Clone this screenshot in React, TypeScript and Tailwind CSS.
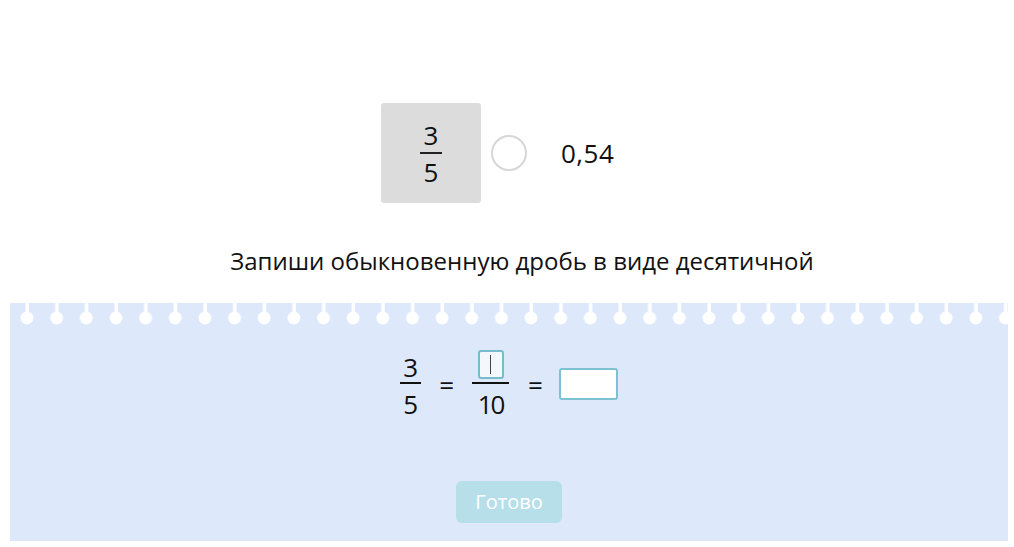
import React from "react";

const font = { fontFamily: '"Open Sans", "Noto Sans", sans-serif' };

function Holes() {
  return (
    <svg className="absolute left-0 top-0" width="998" height="30" aria-hidden>
      <defs>
        <pattern id="hole" x="2.2" y="0" width="29.65" height="30" patternUnits="userSpaceOnUse">
          <rect x="13.3" y="0" width="3.5" height="14" fill="#ffffff" />
          <circle cx="14.8" cy="15" r="6.4" fill="#ffffff" />
        </pattern>
      </defs>
      <rect x="0" y="0" width="998" height="30" fill="url(#hole)" />
    </svg>
  );
}

export default function App() {
  return (
    <div className="h-[547px] w-[1014px] overflow-hidden bg-white text-[#111]" style={font}>
      <div className="flex h-[303px] flex-col pt-[103px]">
        <div className="ml-[381px] flex items-center">
          <div className="flex h-[100px] w-[100px] flex-col items-center justify-center rounded-[3px] bg-[#dcdcdc] text-[26px] leading-none">
            <span className="pb-[4px]">3</span>
            <span className="h-[2px] w-[22px] bg-[#222]" />
            <span className="pt-[5px]">5</span>
          </div>
          <div className="ml-[10px] h-[36px] w-[36px] rounded-full border-2 border-[#d6d6d6] bg-white" />
          <span className="ml-[34px] text-[26px] leading-none tracking-[0.5px]">0,54</span>
        </div>
        <p className="mt-[46px] text-center text-[24px] leading-none">
          <span className="ml-[30px]">Запиши обыкновенную дробь в виде десятичной</span>
        </p>
      </div>

      <div className="relative ml-[10px] h-[238px] w-[998px] bg-[#dde9fb]">
        <Holes />
        <div className="flex items-start justify-center text-[26px] leading-none">
          <div className="mt-[51px] flex flex-col items-center">
            <span className="pb-[2px]">3</span>
            <span className="h-[2px] w-[21px] bg-[#111]" />
            <span className="pt-[7px]">5</span>
          </div>
          <span className="ml-[18px] mt-[69px]">=</span>
          <div className="ml-[18px] mt-[47px] flex flex-col items-center">
            <div className="mb-[3px] flex h-[29px] w-[26px] items-center justify-center rounded-[3px] border-2 border-[#78bccb] bg-[#f4f8fd]">
              <span className="h-[19px] w-[1.5px] bg-[#444]" />
            </div>
            <span className="h-[2px] w-[37px] bg-[#111]" />
            <span className="pt-[7px] tracking-[-2px]">10</span>
          </div>
          <span className="ml-[19px] mt-[69px]">=</span>
          <div className="ml-[16px] mt-[65px] h-[32px] w-[59px] rounded-[3px] border-2 border-[#7cc2d2] bg-white" />
        </div>
        <div className="mt-[64px] flex justify-center">
          <button className="h-[42px] w-[106px] rounded-[6px] bg-[#b7dfe9] text-[20px] font-medium text-white">
            Готово
          </button>
        </div>
      </div>
    </div>
  );
}
